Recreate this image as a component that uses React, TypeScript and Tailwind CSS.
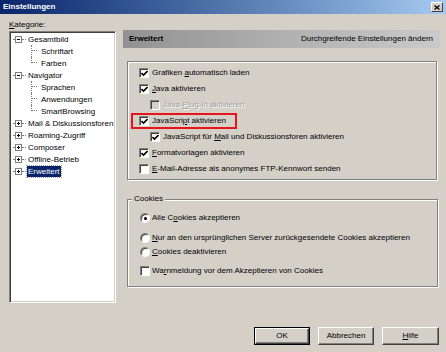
import React from "react";

const font = { fontFamily: '"Liberation Sans", Arial, sans-serif' };

type TreeItem = {
  label: string;
  level: 0 | 1;
  expander?: "minus" | "plus";
  last?: boolean;
  selected?: boolean;
};

const treeItems: TreeItem[] = [
  { label: "Gesamtbild", level: 0, expander: "minus" },
  { label: "Schriftart", level: 1 },
  { label: "Farben", level: 1, last: true },
  { label: "Navigator", level: 0, expander: "minus" },
  { label: "Sprachen", level: 1 },
  { label: "Anwendungen", level: 1 },
  { label: "SmartBrowsing", level: 1, last: true },
  { label: "Mail & Diskussionsforen", level: 0, expander: "plus" },
  { label: "Roaming-Zugriff", level: 0, expander: "plus" },
  { label: "Composer", level: 0, expander: "plus" },
  { label: "Offline-Betrieb", level: 0, expander: "plus" },
  { label: "Erweitert", level: 0, expander: "plus", selected: true },
];

function Expander({ kind }: { kind: "minus" | "plus" }) {
  return (
    <div className="relative w-[7px] h-[7px] border border-[#808080] bg-white flex items-center justify-center">
      <div className="w-[3px] h-px bg-black" />
      {kind === "plus" && <div className="absolute w-px h-[3px] bg-black" />}
    </div>
  );
}

function TreeRow({ item }: { item: TreeItem }) {
  return (
    <div className="flex items-center h-[12px]">
      {item.level === 0 ? (
        <div className="flex items-center pl-[2px]">
          <div className="w-[2px] border-t border-dotted border-[#808080]" />
          <Expander kind={item.expander!} />
          <div className="w-[4px] border-t border-dotted border-[#808080]" />
        </div>
      ) : (
        <div className="flex items-stretch h-full pl-[20px]">
          <div
            className={`w-[6px] border-l border-dotted border-[#808080] ${
              item.last ? "h-[6px] border-b" : "h-full"
            }`}
          >
            {!item.last && <div className="h-[6px] border-b border-dotted border-[#808080]" />}
          </div>
          <div className="w-[2px]" />
        </div>
      )}
      <span
        className={`ml-px px-[1px] leading-[11px] whitespace-nowrap ${
          item.selected ? "bg-[#0a246a] text-white outline outline-1 outline-dotted outline-[#a0a0a0]" : "text-black"
        }`}
      >
        {item.label}
      </span>
    </div>
  );
}

function Checkbox({ checked, disabled }: { checked?: boolean; disabled?: boolean }) {
  return (
    <div
      className={`w-[10px] h-[10px] shrink-0 border border-t-[#808080] border-l-[#808080] border-r-white border-b-white shadow-[inset_1px_1px_0_#404040] flex items-center justify-center ${
        disabled ? "bg-[#d4d0c8]" : "bg-white"
      }`}
    >
      {checked && (
        <svg width="7" height="7" viewBox="0 0 7 7">
          <path d="M0.5 3 L2.5 5 L6.5 1" stroke="#000" strokeWidth="1.6" fill="none" />
        </svg>
      )}
    </div>
  );
}

function Radio({ checked }: { checked?: boolean }) {
  return (
    <div className="w-[10px] h-[10px] shrink-0 rounded-full bg-white border border-t-[#808080] border-l-[#808080] border-r-white border-b-white shadow-[inset_1px_1px_0_#404040] flex items-center justify-center">
      {checked && <div className="w-[3px] h-[3px] rounded-full bg-black" />}
    </div>
  );
}

function U({ children }: { children: React.ReactNode }) {
  return <span className="underline underline-offset-1">{children}</span>;
}

function CheckRow({
  children,
  checked,
  disabled,
  indent,
}: {
  children: React.ReactNode;
  checked?: boolean;
  disabled?: boolean;
  indent?: boolean;
}) {
  return (
    <div className={`flex items-center h-[16px] gap-[3px] ${indent ? "pl-[11px]" : ""}`}>
      <Checkbox checked={checked} disabled={disabled} />
      <span
        className={`whitespace-nowrap ${
          disabled ? "text-[#a0a0a0] [text-shadow:1px_1px_0_#fff]" : "text-black"
        }`}
      >
        {children}
      </span>
    </div>
  );
}

function RadioRow({ children, checked }: { children: React.ReactNode; checked?: boolean }) {
  return (
    <div className="flex items-center h-[14px] gap-[2px]">
      <Radio checked={checked} />
      <span className="whitespace-nowrap">{children}</span>
    </div>
  );
}

function Button({ children, isDefault }: { children: React.ReactNode; isDefault?: boolean }) {
  return (
    <div
      className={`h-[18px] flex items-center justify-center bg-[#d4d0c8] ${
        isDefault ? "border border-black" : ""
      }`}
    >
      <div className="w-full h-full border border-t-white border-l-white border-r-[#404040] border-b-[#404040] shadow-[inset_-1px_-1px_0_#808080] flex items-center justify-center">
        {children}
      </div>
    </div>
  );
}

export default function App() {
  return (
    <div
      style={font}
      className="w-[446px] h-[352px] bg-[#d4d0c8] flex flex-col overflow-hidden text-[8px] text-black leading-none"
    >
      {/* title bar */}
      <div className="h-[14px] bg-gradient-to-r from-[#0a246a] to-[#a6caf0] flex items-center justify-between pl-[3px] pr-[3px]">
        <span className="text-white font-bold text-[8px]">Einstellungen</span>
        <div className="w-[12px] h-[10px] bg-[#d4d0c8] border border-t-white border-l-white border-r-[#404040] border-b-[#404040] flex items-center justify-center">
          <svg width="6" height="5" viewBox="0 0 6 5">
            <path d="M0.5 0.5 L5.5 4.5 M5.5 0.5 L0.5 4.5" stroke="#000" strokeWidth="1.3" />
          </svg>
        </div>
      </div>

      {/* content */}
      <div className="flex pl-[9px] gap-[7px]">
        {/* left column */}
        <div className="w-[107px] pt-[4px] flex flex-col">
          <div className="h-[13px] flex items-center">
            <span>
              <U>K</U>ategorie:
            </span>
          </div>
          <div className="h-[272px] bg-white border border-t-[#808080] border-l-[#808080] border-r-white border-b-white shadow-[inset_1px_1px_0_#404040,inset_-1px_-1px_0_#d4d0c8] pt-[1px] pl-[1px]">
            {treeItems.map((item) => (
              <TreeRow key={item.label} item={item} />
            ))}
          </div>
        </div>

        {/* right column */}
        <div className="w-[317px] pt-[16px] flex flex-col">
          <div className="h-[18px] bg-gradient-to-r from-[#929292] via-[#b0b0b0] to-[#cacaca] flex items-center justify-between pl-[6px] pr-[7px]">
            <span className="font-bold">Erweitert</span>
            <span>Durchgreifende Einstellungen ändern</span>
          </div>

          <div className="mt-[13px] ml-[4px] mr-[3px] h-[119px] border border-[#808080] shadow-[inset_1px_1px_0_#fff,1px_1px_0_#fff] pt-[3px] pl-[11px]">
            <CheckRow checked>
              Grafiken <U>a</U>utomatisch laden
            </CheckRow>
            <CheckRow checked>
              <U>J</U>ava aktivieren
            </CheckRow>
            <CheckRow indent disabled>
              Java-<U>P</U>lug-In aktivieren
            </CheckRow>
            <div className="relative">
              <CheckRow checked>
                JavaScri<U>p</U>t aktivieren
              </CheckRow>
              <div className="absolute left-[-8px] top-0 w-[106px] h-[16px] border-2 border-[#e8141b]" />
            </div>
            <CheckRow indent checked>
              JavaScript für <U>M</U>ail und Diskussionsforen aktivieren
            </CheckRow>
            <CheckRow checked>
              <U>F</U>ormatvorlagen aktivieren
            </CheckRow>
            <CheckRow>
              <U>E</U>-Mail-Adresse als anonymes FTP-Kennwort senden
            </CheckRow>
          </div>

          <div className="relative mt-[19px] ml-[4px] mr-[2px] h-[88px] border border-[#808080] shadow-[inset_1px_1px_0_#fff,1px_1px_0_#fff] pl-[12px] pt-[11px]">
            <span className="absolute left-[4px] top-[-5px] bg-[#d4d0c8] px-[2px]">Cookies</span>
            <RadioRow checked>
              Alle C<U>o</U>okies akzeptieren
            </RadioRow>
            <div className="mt-[6px]">
              <RadioRow>
                <U>N</U>ur an den ursprünglichen Server zurückgesendete Cookies akzeptieren
              </RadioRow>
            </div>
            <RadioRow>
              <U>C</U>ookies deaktivieren
            </RadioRow>
            <div className="mt-[5px] flex items-center h-[14px] gap-[2px]">
              <Checkbox />
              <span className="whitespace-nowrap">
                Wa<U>r</U>nmeldung vor dem Akzeptieren von Cookies
              </span>
            </div>
          </div>
        </div>
      </div>

      {/* buttons */}
      <div className="mt-[24px] flex justify-end pr-[7px] gap-[8px]">
        <div className="w-[56px]">
          <Button isDefault>OK</Button>
        </div>
        <div className="w-[56px]">
          <Button>Abbrechen</Button>
        </div>
        <div className="w-[57px]">
          <Button>
            <U>H</U>ilfe
          </Button>
        </div>
      </div>
    </div>
  );
}
